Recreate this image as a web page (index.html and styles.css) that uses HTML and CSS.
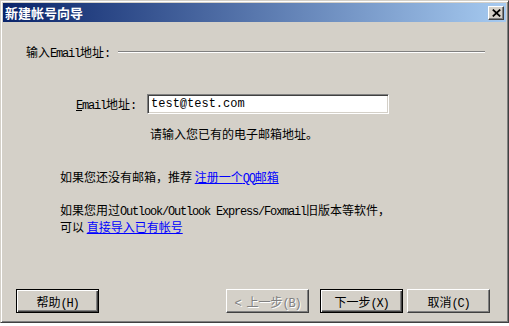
FILE: index.html
```html
<!DOCTYPE html>
<html lang="zh-CN">
<head>
    <meta charset="UTF-8">
    <title>新建帐号向导</title>
    <link rel="stylesheet" href="styles.css">
</head>
<body>
    <div class="window">
        <div class="titlebar">
            <span class="title">新建帐号向导</span>
            <span class="close">
                <svg width="9" height="8" viewBox="0 0 9 8"><path d="M0.8 0.6 L8.2 7.4 M8.2 0.6 L0.8 7.4" stroke="#000" stroke-width="1.8" fill="none"/></svg>
            </span>
        </div>

        <div class="section-head">
            <span>输入<span class="en">Email</span>地址<span class="en">:</span></span>
            <div class="etched"></div>
        </div>

        <div class="form-row">
            <label class="field-label" for="email"><span class="en"><u>E</u>mail</span>地址<span class="en">:</span></label>
            <input class="textbox" id="email" type="text" value="test@test.com" readonly>
        </div>

        <p class="hint">请输入您已有的电子邮箱地址。</p>

        <p class="para">如果您还没有邮箱，推荐 <a href="#">注册一个<span class="en">QQ</span>邮箱</a></p>

        <p class="para para-two">如果您用过<span class="en">Outlook/Outlook Express/Foxmail</span>旧版本等软件，<br>可以 <a href="#">直接导入已有帐号</a></p>

        <div class="footer">
            <button class="btn btn-default btn-help">帮助<span class="en">(H)</span></button>
            <button class="btn btn-disabled btn-back"><span class="en">&lt; </span>上一步<span class="en">(B)</span></button>
            <button class="btn btn-default btn-next">下一步<span class="en">(X)</span></button>
            <button class="btn btn-cancel">取消<span class="en">(C)</span></button>
        </div>
    </div>
</body>
</html>
```

FILE: styles.css
```css
body {
    margin: 0;
    background-color: #fff;
    font-family: "Noto Sans CJK SC", sans-serif;
    font-size: 12px;
    color: #000;
}
.en {
    font-family: "Liberation Mono", monospace;
    font-size: 12px;
    line-height: 12px;
    letter-spacing: -1.2px;
}
.window {
    width: 509px;
    height: 323px;
    box-sizing: border-box;
    padding: 2px;
    display: flex;
    flex-direction: column;
    background-color: #d4d0c8;
    border: 1px solid;
    border-color: #d4d0c8 #404040 #404040 #d4d0c8;
    box-shadow: inset 1px 1px #fff, inset -1px -1px #808080;
}
.titlebar {
    height: 19px;
    flex-shrink: 0;
    padding: 0 2px;
    display: flex;
    align-items: center;
    justify-content: space-between;
    background: linear-gradient(to right, #0a246a, #a6caf0);
}
.title {
    color: #fff;
    font-weight: bold;
    font-size: 13px;
    line-height: 19px;
}
.close {
    width: 16px;
    height: 14px;
    box-sizing: border-box;
    display: flex;
    align-items: center;
    justify-content: center;
    background-color: #d4d0c8;
    border: 1px solid;
    border-color: #fff #404040 #404040 #fff;
    box-shadow: inset -1px -1px #808080;
}
.section-head {
    height: 16px;
    margin: 22px 21px 0 23px;
    display: flex;
    align-items: center;
    gap: 8px;
    line-height: 16px;
}
.etched {
    flex: 1;
    height: 0;
    border-top: 1px solid #808080;
    border-bottom: 1px solid #fff;
}
.form-row {
    height: 20px;
    margin: 34px 0 0 73px;
    display: flex;
    align-items: center;
    gap: 11px;
}
.field-label {
    line-height: 20px;
}
.textbox {
    width: 242px;
    height: 20px;
    box-sizing: border-box;
    margin: 0;
    padding: 0 3px;
    background-color: #fff;
    border: 1px solid;
    border-color: #808080 #fff #fff #808080;
    box-shadow: inset 1px 1px #404040, inset -1px -1px #d4d0c8;
    font-family: "Liberation Mono", monospace;
    font-size: 12px;
    color: #000;
    outline: none;
}
.hint {
    margin: 12px 0 0 147px;
    line-height: 16px;
}
.para {
    margin: 27px 0 0 57px;
    line-height: 16px;
}
.para-two {
    margin-top: 16px;
    line-height: 17px;
}
a {
    color: #0000ff;
    text-decoration: underline;
}
.footer {
    margin: auto 0 7px 0;
    display: flex;
}
.btn {
    width: 83px;
    height: 24px;
    padding: 0;
    font: inherit;
    color: #000;
    background-color: #d4d0c8;
    border: 1px solid;
    border-color: #fff #404040 #404040 #fff;
    box-shadow: inset -1px -1px #808080;
}
.btn-default {
    border-color: #000;
    box-shadow: inset 1px 1px #fff, inset -1px -1px #404040, inset -2px -2px #808080;
}
.btn-disabled {
    color: #808080;
    text-shadow: 1px 1px #fff;
}
.btn-help {
    margin-left: 13px;
}
.btn-back {
    margin-left: 127px;
}
.btn-next {
    margin-left: 11px;
}
.btn-cancel {
    margin-left: 4px;
}
```
